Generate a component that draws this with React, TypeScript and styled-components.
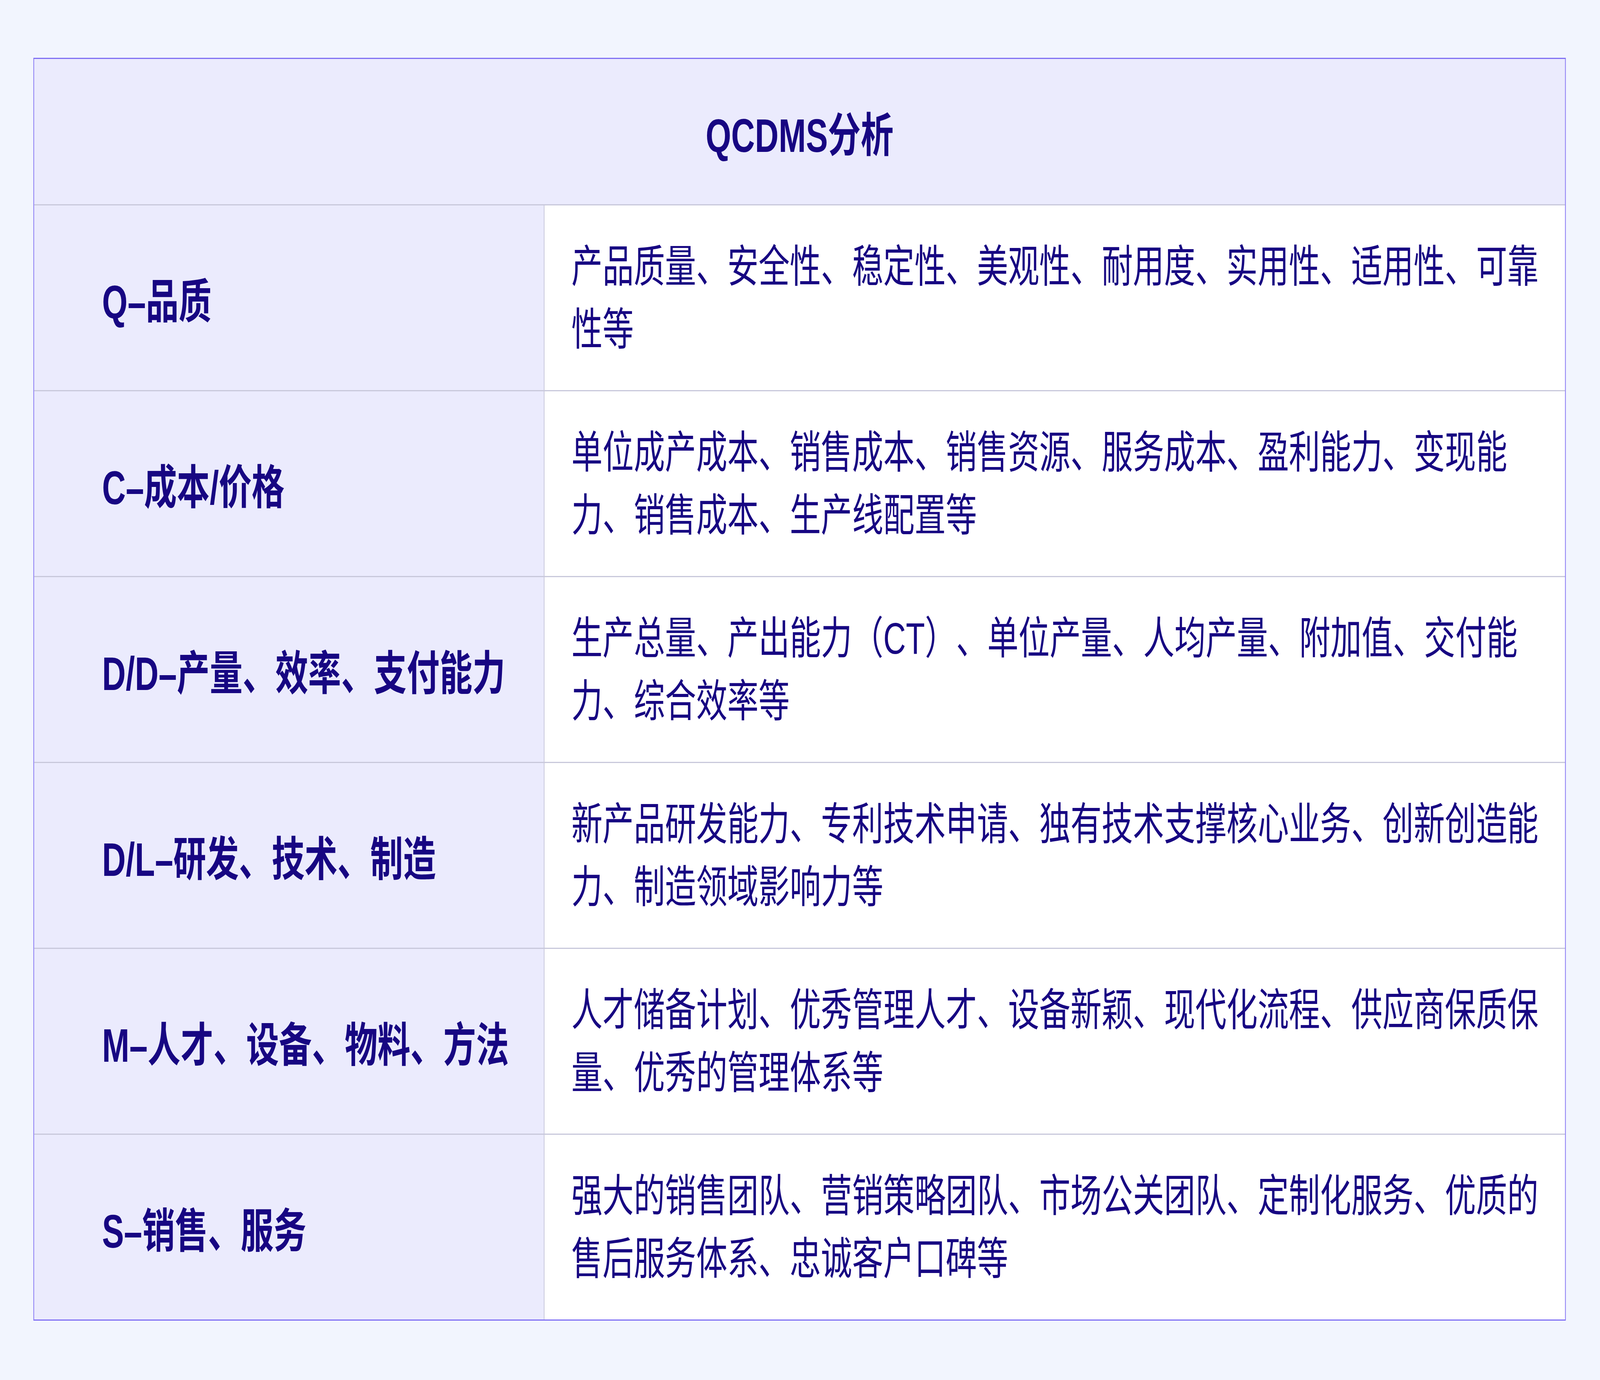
import React from 'react';
import styled, { createGlobalStyle } from 'styled-components';

const FRAME_W = 5847;
const FRAME_H = 3534;

const GlobalStyle = createGlobalStyle`
	html, body {
		margin: 0;
		padding: 0;
		background: #f2f5fe;
		overflow: hidden;
	}
	* {
		box-sizing: border-box;
	}
`;

// the page is drawn for a 5847x3534 frame and fitted to the real window
const Stage = styled.div`
	width: ${FRAME_W}px;
	height: ${FRAME_H}px;
	transform-origin: 0 0;
	padding: 148px 0 0 122px;
	background: #f2f5fe;
	font-family: 'Liberation Sans', 'Noto Sans CJK SC', sans-serif;
	color: #170682;
	text-spacing-trim: space-all;
`;

const Table = styled.div`
	width: 5600px;
	border: 3px solid #8070f4;
	background: #ffffff;
`;

const HeaderRow = styled.div`
	height: 372px;
	display: flex;
	align-items: center;
	justify-content: center;
	background: #ebebfd;
	font-size: 120px;
	font-weight: 700;
`;

const Row = styled.div`
	display: grid;
	grid-template-columns: 1865px 1fr;
	height: 476px;
	border-top: 3px solid #c8c8db;
`;

const LabelCell = styled.div`
	display: flex;
	align-items: center;
	padding-left: 248px;
	background: #ebebfd;
	border-right: 3px solid #cacadc;
	font-size: 120px;
	font-weight: 700;
	white-space: nowrap;
`;

const ContentCell = styled.div`
	display: flex;
	align-items: center;
	padding: 0 41px 0 98px;
	background: #ffffff;
	font-size: 114px;
	font-weight: 400;
	line-height: 161px;
`;

const ContentText = styled.div`
	width: 100%;
	line-break: strict;
`;

const rows = [
	{
		label: 'Q–品质',
		text: '产品质量、安全性、稳定性、美观性、耐用度、实用性、适用性、可靠性等',
	},
	{
		label: 'C–成本/价格',
		text: '单位成产成本、销售成本、销售资源、服务成本、盈利能力、变现能力、销售成本、生产线配置等',
	},
	{
		label: 'D/D–产量、效率、支付能力',
		text: '生产总量、产出能力（CT）、单位产量、人均产量、附加值、交付能力、综合效率等',
	},
	{
		label: 'D/L–研发、技术、制造',
		text: '新产品研发能力、专利技术申请、独有技术支撑核心业务、创新创造能力、制造领域影响力等',
	},
	{
		label: 'M–人才、设备、物料、方法',
		text: '人才储备计划、优秀管理人才、设备新颖、现代化流程、供应商保质保量、优秀的管理体系等',
	},
	{
		label: 'S–销售、服务',
		text: '强大的销售团队、营销策略团队、市场公关团队、定制化服务、优质的售后服务体系、忠诚客户口碑等',
	},
];

const App: React.FC = () => {
	const [scale, setScale] = React.useState({ x: 1, y: 1 });

	React.useLayoutEffect(() => {
		const update = () =>
			setScale({
				x: window.innerWidth / FRAME_W,
				y: window.innerHeight / FRAME_H,
			});
		update();
		window.addEventListener('resize', update);
		return () => window.removeEventListener('resize', update);
	}, []);

	return (
		<>
			<GlobalStyle />
			<Stage style={{ transform: `scale(${scale.x}, ${scale.y})` }}>
				<Table>
					<HeaderRow>QCDMS分析</HeaderRow>
					{rows.map((row) => (
						<Row key={row.label}>
							<LabelCell>{row.label}</LabelCell>
							<ContentCell>
								<ContentText>{row.text}</ContentText>
							</ContentCell>
						</Row>
					))}
				</Table>
			</Stage>
		</>
	);
};

export default App;
